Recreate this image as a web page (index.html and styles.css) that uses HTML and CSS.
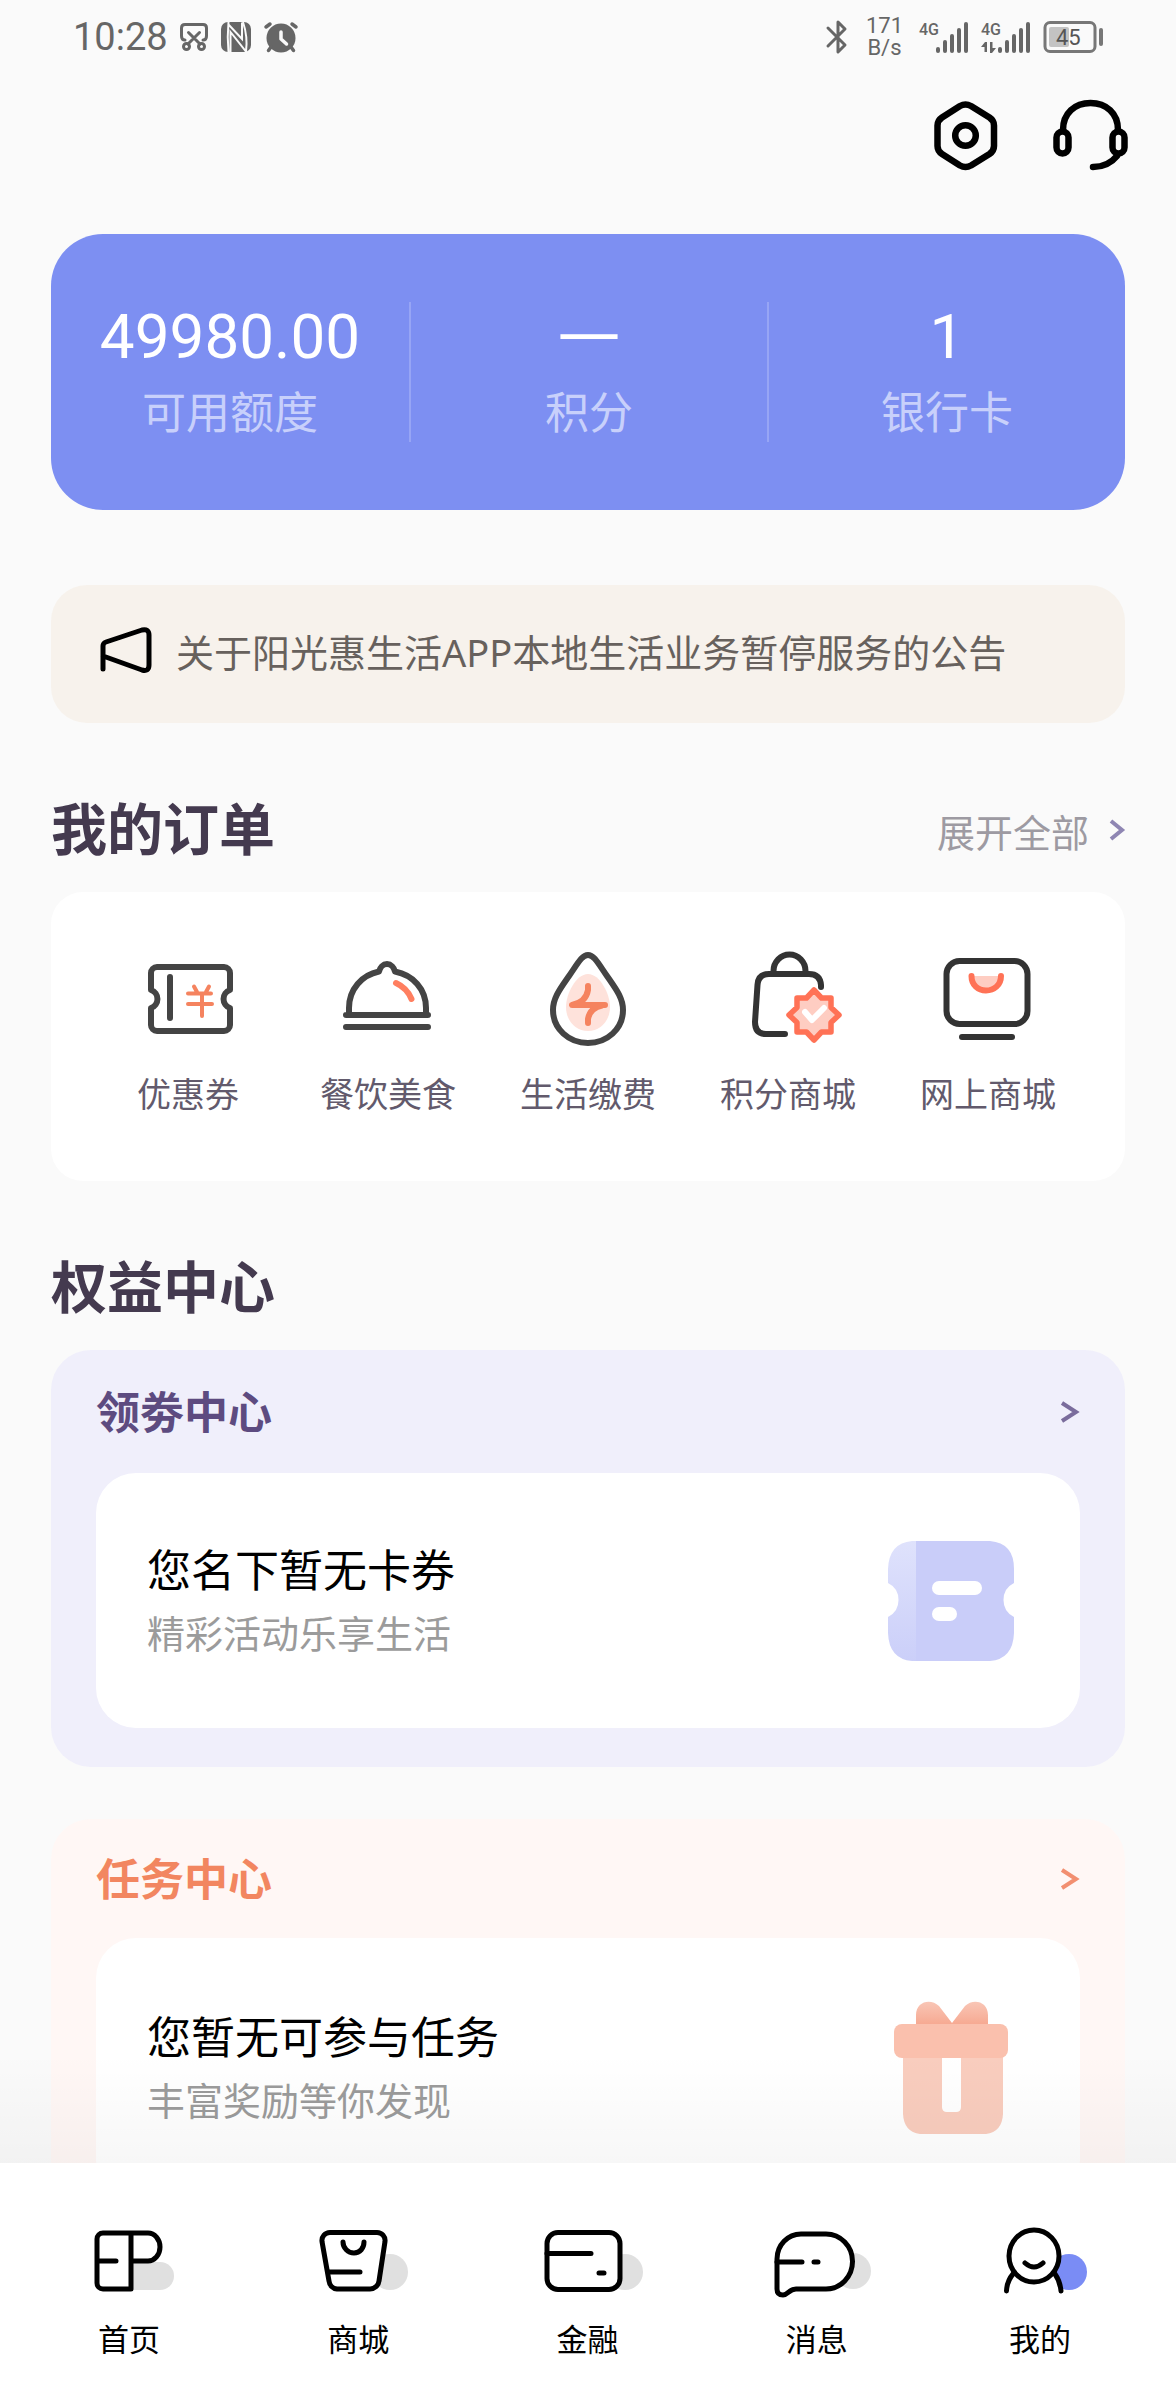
FILE: index.html
```html
<!DOCTYPE html>
<html lang="zh-CN">
<head>
<meta charset="utf-8">
<meta name="viewport" content="width=device-width, initial-scale=1">
<title>我的</title>
<link rel="stylesheet" href="styles.css">
</head>
<body>
<div class="app">
  <div class="status">
    <div class="status-group">
      <span class="clock">10:28</span>
      <svg class="line" width="28" height="28" viewBox="0 0 28 28" stroke-width="3"><path d="M5 17Q1.5 17 1.5 13V5q0-3.500 3.500-3.500H23q3.500 0 3.500 3.500V13q0 4-3.500 4M8.500 9.500L20 21M19.500 9.500L8 21"/><circle cx="6.500" cy="23.500" r="3"/><circle cx="21.500" cy="23.500" r="3"/></svg>
      <svg width="32" height="30" viewBox="0 0 32 30"><rect x="1" width="30" height="30" rx="7" fill="#666"/><path d="M8.500 30Q7 15 8.500 0M8 2L22 17V0.500M10.500 30V10L26 29.500Q28 15 23 0" fill="none" stroke="#fafafa" stroke-width="2"/></svg>
      <svg class="line" width="34" height="30" viewBox="0 0 34 30" stroke-width="3.500"><circle cx="17" cy="16" r="14.500" fill="#666" stroke="none"/><path d="M2 5L6 2M32 5L28 2M4.500 28.500L7 25M29.500 28.500L27 25"/><path d="M17 10V17L22.500 22" stroke="#fafafa"/></svg>
    </div>
    <div class="status-group">
      <svg class="line" width="22" height="34" viewBox="0 0 22 34" stroke-width="3"><path d="M2 8L19 25L12 32V2L19 9L2 26"/></svg>
      <span class="speed"><span>171</span><span>B/s</span></span>
      <svg width="50" height="32" viewBox="0 0 50 32" fill="#666"><text class="net" x="0" y="14">4G</text><rect x="17" y="26" width="4" height="6" rx="2"/><rect x="24" y="19" width="4" height="13" rx="2"/><rect x="31" y="13" width="4" height="19" rx="2"/><rect x="38" y="7" width="4" height="25" rx="2"/><rect x="45" y="1" width="4" height="31" rx="2"/></svg>
      <svg width="50" height="32" viewBox="0 0 50 32" fill="#666"><text class="net" x="0" y="14">4G</text><path d="M0 26L4 21H6V31H3.500V26ZM9 21V32H11L15 27H11.500V21Z"/><rect x="17" y="26" width="4" height="6" rx="2"/><rect x="24" y="19" width="4" height="13" rx="2"/><rect x="31" y="13" width="4" height="19" rx="2"/><rect x="38" y="7" width="4" height="25" rx="2"/><rect x="45" y="1" width="4" height="31" rx="2"/></svg>
      <svg width="60" height="32" viewBox="0 0 60 32"><rect x="2" y="1.500" width="50" height="29" rx="5" fill="none" stroke="#777" stroke-width="3"/><rect x="6" y="6" width="20" height="20" rx="2" fill="#c3c3c3"/><rect x="56" y="7" width="4" height="18" rx="2" fill="#777"/><text class="level" x="13" y="24">45</text></svg>
    </div>
  </div>

  <header class="actions">
    <button class="icon-button" type="button" aria-label="设置">
      <svg class="ink" width="80" height="80" viewBox="0 0 80 80" stroke-width="6.500"><path d="M35 11q5.500-3 11 0L64.500 22.500q4.500 3 4.500 8V51q0 5-4.500 8L46 70.500q-5.500 3-11 0L17 59q-4.500-3-4.500-8V30.500q0-5 4.500-8Z"/><circle cx="40.500" cy="40.500" r="10.300"/></svg>
    </button>
    <button class="icon-button" type="button" aria-label="客服">
      <svg class="ink" width="80" height="80" viewBox="0 0 80 80" stroke-width="6.500"><path d="M13 35C13 18 25 8 40.500 8S68 18 68 35M67 61Q58 72 43 72"/><rect x="6.500" y="36.500" width="12" height="22" rx="6"/><rect x="62.500" y="36.500" width="12" height="22" rx="6"/></svg>
    </button>
  </header>

  <main class="content">
    <section class="summary">
      <a class="stat" href="#quota"><span class="stat-value">49980.00</span><span class="stat-label">可用额度</span></a>
      <a class="stat" href="#points"><span class="stat-value stat-empty">—</span><span class="stat-label">积分</span></a>
      <a class="stat" href="#cards"><span class="stat-value">1</span><span class="stat-label">银行卡</span></a>
    </section>

    <a class="notice" href="#notice">
      <svg class="ink" width="52" height="46" viewBox="0 0 52 46" stroke-width="5"><path d="M3 42V19Q3 16 6 15L42 3Q49 1.500 49 8V38Q49 45 42 43L3 29"/></svg>
      <span>关于阳光惠生活APP本地生活业务暂停服务的公告</span>
    </a>

    <div class="section-head">
      <h2>我的订单</h2>
      <a class="more" href="#orders">展开全部
        <svg width="16" height="22" viewBox="0 0 16 22"><path d="M2 2L13 11L2 20" fill="none" stroke="#8f86b3" stroke-width="4"/></svg>
      </a>
    </div>
    <nav class="orders" aria-label="我的订单">
      <a class="order" href="#coupon">
        <svg class="dark" width="100" height="100" viewBox="0 0 100 100" stroke-width="6"><path d="M13 42V25a6 6 0 0 1 6-6H86a6 6 0 0 1 6 6V42a9.500 9.500 0 0 0 0 18V77a6 6 0 0 1-6 6H19a6 6 0 0 1-6-6V60a9.500 9.500 0 0 0 0-18ZM32 29V70"/><path d="M50 45.500H73M50 56H74M64 46V68M56 38.500L59 44M71 38.500L68 44" stroke="#f5835f" stroke-width="4"/></svg>
        <span>优惠券</span>
      </a>
      <a class="order" href="#food">
        <svg class="dark" width="100" height="100" viewBox="0 0 100 100" stroke-width="6"><path d="M8 67H90M8 79H90M11 66V60C11 41 24 27 41 23.500c1-4 4-7.500 8-7.500s7 3.500 8 7.500C75 27 88 41 88 60V66"/><path d="M58 35Q69 40 73.500 51" stroke="#ff7f60"/></svg>
        <span>餐饮美食</span>
      </a>
      <a class="order" href="#bills">
        <svg class="dark" width="100" height="100" viewBox="0 0 100 100" stroke-width="6"><path d="M50 7C44 7 40 15 31 28C22 41 15 50 15 62C15 81 31 95 50 95S85 81 85 62C85 50 78 41 69 28C60 15 56 7 50 7Z"/><path d="M50 26C38 26 28 46 28 59C28 73 38 83 50 83S72 73 72 59C72 46 62 26 50 26Z" fill="#fee2db" stroke="none"/><path d="M50 38V42Q48 54 34 57H67M50 75V71Q52 60 64 57.500" stroke="#f5835f"/></svg>
        <span>生活缴费</span>
      </a>
      <a class="order" href="#points-mall">
        <svg class="darker" width="100" height="100" viewBox="0 0 100 100" stroke-width="6"><path d="M83 39V37Q82 26 71 26H31Q20 26 19.500 37L17 74Q17 86 28 86H47M35.500 25V23a16 16.500 0 0 1 32 0V25"/><path d="M76 42L83.500 50H93V59.500L101 67L93 74.500V84H83.500L76 92L68.500 84H59V74.500L51 67L59 59.500V50H68.500Z" fill="#fecdc2" stroke="#ff7256" stroke-width="5.500"/><path d="M67 64L74 72L86 60" stroke="#fff"/></svg>
        <span>积分商城</span>
      </a>
      <a class="order" href="#online-mall">
        <svg class="darker" width="100" height="100" viewBox="0 0 100 100" stroke-width="6"><rect x="8.500" y="13" width="81" height="63" rx="13"/><path d="M24 89H74"/><path d="M33.500 28C33.500 37 40 42.500 48 42.500S63 37 63 28" stroke="#ff7256" fill="#fecdc2"/></svg>
        <span>网上商城</span>
      </a>
    </nav>

    <div class="section-head">
      <h2>权益中心</h2>
    </div>
    <section class="panel panel-coupon">
      <a class="panel-head" href="#coupon-center">
        <h3>领劵中心</h3>
        <svg width="20" height="22" viewBox="0 0 20 22"><path d="M2 2L16 11L2 20" fill="none" stroke="#7a6c9c" stroke-width="4"/></svg>
      </a>
      <div class="panel-body">
        <div>
          <p class="panel-title">您名下暂无卡券</p>
          <p class="panel-note">精彩活动乐享生活</p>
        </div>
        <svg width="126" height="120" viewBox="0 0 126 120">
          <defs><linearGradient id="strip" x1="0" y1="0" x2="0" y2="1"><stop offset="0" stop-color="#dfe2fc"/><stop offset="1" stop-color="#cbcff9"/></linearGradient></defs>
          <path d="M27 0H102Q126 2 126 28V42A19 19 0 0 0 126 76V92Q125 118 102 120H27Z" fill="#c9cdf9"/>
          <path d="M28 0H24Q1 2 0 28V42A19 19 0 0 1 0 76V92Q1 118 24 120H28Z" fill="url(#strip)"/>
          <rect x="44" y="40" width="50" height="14" rx="7" fill="#fff"/><rect x="44" y="66" width="25" height="14" rx="7" fill="#fff"/>
        </svg>
      </div>
    </section>

    <section class="panel panel-task">
      <a class="panel-head" href="#task-center">
        <h3>任务中心</h3>
        <svg width="20" height="22" viewBox="0 0 20 22"><path d="M2 2L16 11L2 20" fill="none" stroke="#f28f70" stroke-width="4"/></svg>
      </a>
      <div class="panel-body">
        <div>
          <p class="panel-title">您暂无可参与任务</p>
          <p class="panel-note">丰富奖励等你发现</p>
        </div>
        <svg width="126" height="132" viewBox="0 0 126 132">
          <defs><linearGradient id="bow" x1="0" y1="0" x2="0" y2="1"><stop offset="0" stop-color="#f9c6b6"/><stop offset="1" stop-color="#f6a78f"/></linearGradient></defs>
          <path d="M28 24V13C28-1 43-4 51 4L64 21L77 4C85-4 100-1 100 13V24Z" fill="url(#bow)"/>
          <path d="M15 54H115V112Q114 130 98 132H32Q16 130 15 112Z" fill="#f9cdbe"/>
          <rect x="6" y="22" width="114" height="34" rx="8" fill="#fac0ad"/>
          <path d="M54 56H73V105Q73 110 68 110H59Q54 110 54 105Z" fill="#fff"/>
        </svg>
      </div>
    </section>
  </main>

  <nav class="tabs" aria-label="主导航">
    <a class="tab" href="#home">
      <svg class="ink" width="110" height="84" viewBox="0 0 110 84" stroke-width="5"><path d="M57 42H86a14 14 0 0 1 0 28H57Z" fill="#e0e0e0" stroke="none"/><path d="M57 13H29a6 6 0 0 0-6 6V63a6 6 0 0 0 6 6H57V13H74a12 14 0 0 1 0 28H57M23 41H42"/></svg>
      <span>首页</span>
    </a>
    <a class="tab" href="#mall">
      <svg class="ink" width="110" height="84" viewBox="0 0 110 84" stroke-width="5"><circle cx="87" cy="52" r="18" fill="#e0e0e0" stroke="none"/><path d="M27 12.500H74a8 8 0 0 1 8 9L76 61a9 9 0 0 1-9 8H34a9 9 0 0 1-8-8L19 21.500a8 8 0 0 1 8-9Z" fill="#fff"/><path d="M40 22c0 6 5 11 11 11s10-5 10-11M26 52H57"/></svg>
      <span>商城</span>
    </a>
    <a class="tab" href="#finance">
      <svg class="ink" width="110" height="84" viewBox="0 0 110 84" stroke-width="5"><circle cx="92" cy="52" r="18" fill="#e0e0e0" stroke="none"/><rect x="14" y="12.500" width="73" height="57" rx="11" fill="#fff"/><path d="M14 33.500H58M66 53H71"/></svg>
      <span>金融</span>
    </a>
    <a class="tab" href="#message">
      <svg class="ink" width="110" height="84" viewBox="0 0 110 84" stroke-width="5"><circle cx="91" cy="51" r="18" fill="#e0e0e0" stroke="none"/><path d="M15 69V39A24 25 0 0 1 39 14H64a26.500 27.500 0 0 1 0 55H34c-7 0-8 6-13 6q-6 0-6-6Z" fill="#fff"/><path d="M15 42H40M52 42H56"/></svg>
      <span>消息</span>
    </a>
    <a class="tab tab-active" href="#mine" aria-current="page">
      <svg class="ink" width="98" height="84" viewBox="0 0 98 84" stroke-width="5"><circle cx="78" cy="52" r="18" fill="#7a8cf5" stroke="none"/><path d="M22 53Q16 61 16 71H70Q70 61 64 53Z" fill="#fff" stroke="none"/><ellipse cx="43" cy="36" rx="25" ry="26" fill="#fff"/><path d="M34 43Q43 51 52 43M22 54Q16 61 15.500 71M64 54Q69 61 70 71"/></svg>
      <span>我的</span>
    </a>
  </nav>
</div>
</body>
</html>
```
FILE: styles.css
```css
* {
  box-sizing: border-box;
}

body,
h2,
h3,
p {
  margin: 0;
}

body {
  background: #fafafa;
  color: #000;
  font-family: "Noto Sans", "Noto Sans CJK SC", sans-serif;
}

a {
  color: inherit;
  text-decoration: none;
}

svg {
  display: block;
  flex: none;
  overflow: visible;
}

.line,
.ink,
.dark,
.darker {
  fill: none;
  stroke: #666;
  stroke-linecap: round;
  stroke-linejoin: round;
}

.ink {
  stroke: #000;
}

.dark {
  stroke: #444;
}

.darker {
  stroke: #333;
}

.app {
  display: flex;
  flex-direction: column;
  height: 100vh;
}

/* Status bar */
.status {
  display: flex;
  flex: none;
  align-items: center;
  justify-content: space-between;
  height: 73px;
  padding: 0 73px;
  color: #666;
  font-family: Roboto, sans-serif;
}

.status-group {
  display: flex;
  align-items: center;
  gap: 12px;
}

.clock {
  font-size: 38px;
  line-height: 44px;
}

.speed {
  display: flex;
  flex-direction: column;
  align-items: center;
  margin: 0 4px 0 6px;
  font-size: 22px;
  line-height: 22px;
}

.net {
  font-size: 16px;
  font-weight: 500;
}

.level {
  fill: #555;
  font-size: 22px;
}

/* Header buttons */
.actions {
  display: flex;
  flex: none;
  justify-content: flex-end;
  gap: 45px;
  padding: 22px 46px 0;
}

.icon-button {
  padding: 0;
  border: 0;
  background: none;
}

/* Scrolling content */
.content {
  flex: 1;
  min-height: 0;
  padding: 59px 51px 0;
  overflow-y: auto;
  scrollbar-width: none;
}

.summary {
  display: grid;
  grid-template-columns: repeat(3, 1fr);
  padding: 68px 0;
  border-radius: 52px;
  background: #7d8ff2;
  color: #fff;
}

.stat {
  display: flex;
  flex-direction: column;
  align-items: center;
  height: 140px;
}

.stat + .stat {
  border-left: 2px solid #97a5f5;
}

.stat-value {
  font-family: Roboto, "Noto Sans CJK SC", sans-serif;
  font-size: 62px;
  line-height: 70px;
}

.stat-empty {
  padding-bottom: 16px;
  font-family: "Noto Sans", sans-serif;
  line-height: 54px;
}

.stat-label {
  color: #c8d0fb;
  font-size: 44px;
  line-height: 80px;
}

.notice {
  display: flex;
  align-items: center;
  gap: 24px;
  min-height: 138px;
  margin-top: 75px;
  padding: 0 49px 8px;
  border-radius: 36px;
  background: #f7f2ec;
  color: #67615d;
  font-size: 38px;
}

.section-head {
  display: flex;
  align-items: center;
  justify-content: space-between;
  height: 128px;
  margin-top: 41px;
}

h2 {
  color: #443a4f;
  font-size: 56px;
  line-height: 80px;
}

.more {
  display: flex;
  align-items: center;
  gap: 20px;
  padding-top: 4px;
  color: #9d9aa2;
  font-size: 38px;
}

.orders {
  display: grid;
  grid-template-columns: repeat(5, 1fr);
  padding: 56px 37px 61px;
  border-radius: 32px;
  background: #fff;
}

.order {
  display: flex;
  flex-direction: column;
  align-items: center;
  gap: 20px;
  color: #625a6c;
  font-size: 34px;
  line-height: 52px;
}

/* Benefit panels */
.panel {
  padding: 0 45px 39px;
  border-radius: 40px;
}

.panel + .panel {
  margin-top: 52px;
}

.panel-coupon {
  background: #f0effb;
}

.panel-task {
  background: #fff7f5;
}

.panel-head {
  display: flex;
  align-items: center;
  justify-content: space-between;
  height: 123px;
}

.panel-coupon .panel-head {
  color: #5d4b80;
}

.panel-task .panel-head {
  height: 119px;
  color: #f28660;
}

h3 {
  font-size: 44px;
  line-height: 64px;
}

.panel-body {
  display: flex;
  align-items: center;
  justify-content: space-between;
  min-height: 255px;
  padding: 0 66px 0 51px;
  border-radius: 40px;
  background: #fff;
}

.panel-task .panel-body {
  min-height: 260px;
}

.panel-title {
  font-size: 44px;
  line-height: 64px;
}

.panel-note {
  color: #9b9b9b;
  font-size: 38px;
  line-height: 62px;
}

/* Bottom tab bar */
.tabs {
  position: relative;
  display: flex;
  flex: none;
  justify-content: space-between;
  padding: 57px 87px 35px 74px;
  background: #fff;
}

/* Soft shade cast on the content above the bar */
.tabs::before {
  position: absolute;
  right: 0;
  bottom: 100%;
  left: 0;
  height: 110px;
  background: linear-gradient(transparent, rgba(0, 0, 0, 0.03));
  content: "";
  pointer-events: none;
}

.tab {
  display: flex;
  flex-direction: column;
  align-items: center;
  gap: 9px;
  width: 110px;
  font-size: 31px;
  line-height: 52px;
}

.tab-active {
  width: 98px;
}
```
